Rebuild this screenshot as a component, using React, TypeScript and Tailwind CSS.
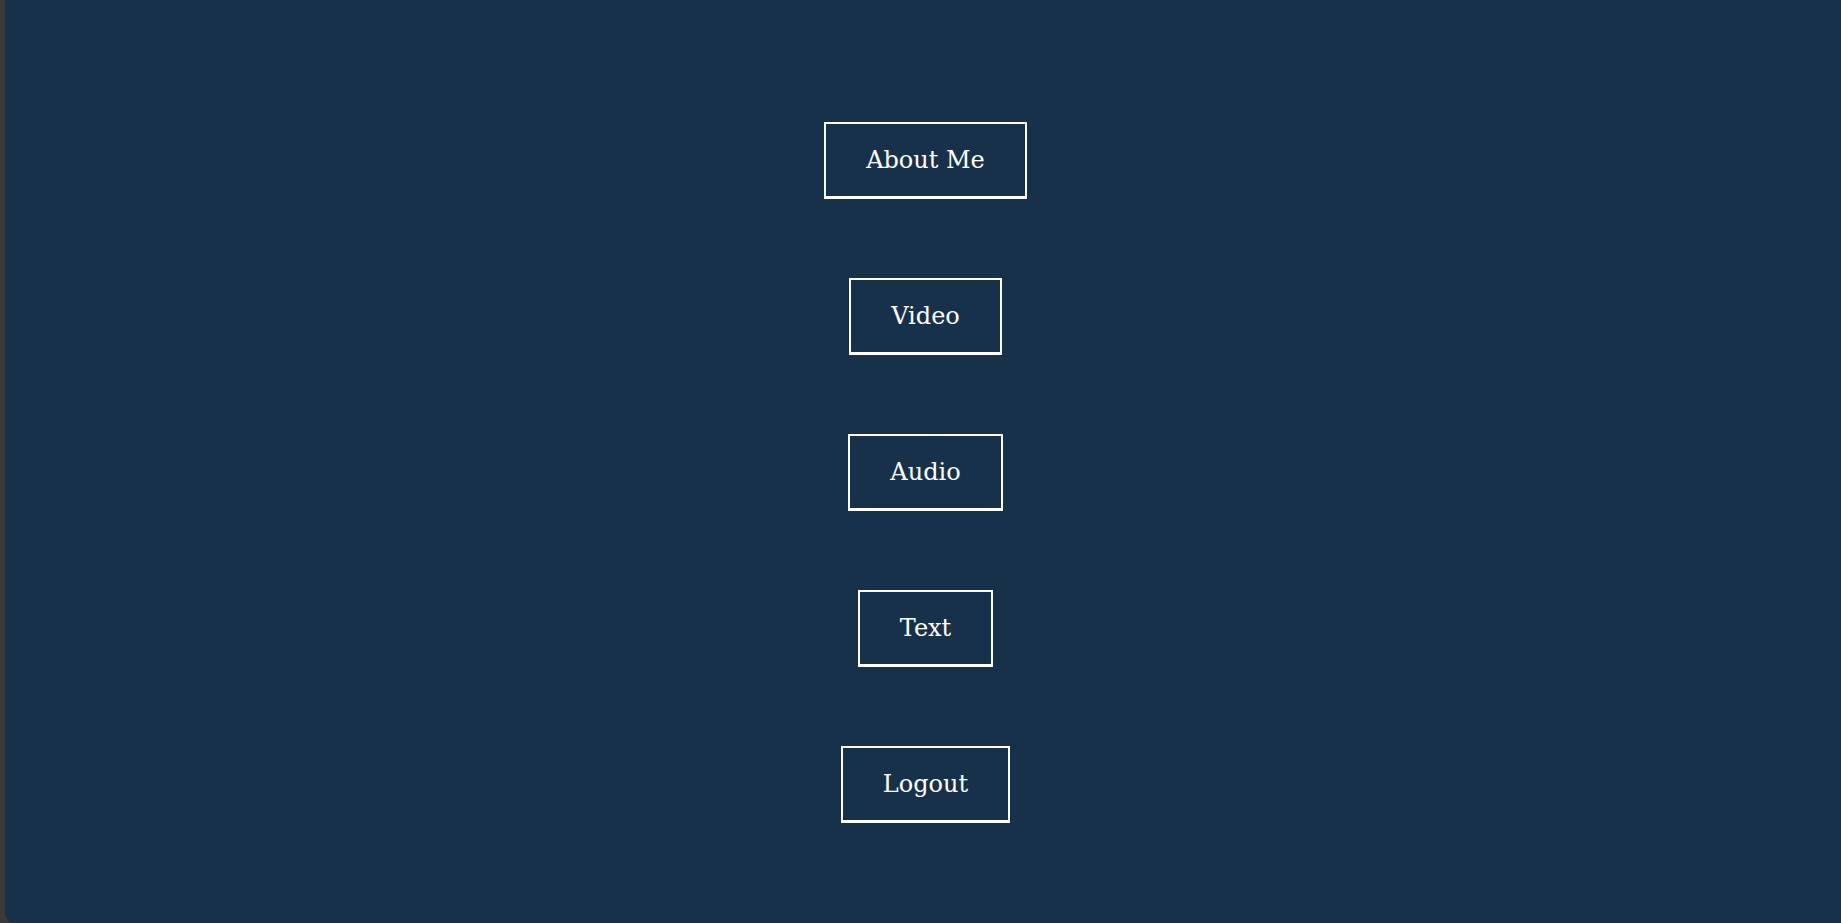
import React from "react";

const items = ["About Me", "Video", "Audio", "Text", "Logout"];

const NavButton = ({ label }: { label: string }) => {
  return (
    <button className="border-2 border-b-[3px] border-white px-[40px] pt-[18px] pb-[18px] text-[24px] leading-[36px] text-white bg-transparent">
      {label}
    </button>
  );
};

export default function App() {
  return (
    <div className="flex h-[923px] w-full bg-[#3a3a3a]">
      <div
        className="ml-[5px] flex flex-1 flex-col items-center gap-[79px] rounded-bl-[10px] bg-[#18314b] pl-[5px] pt-[122px]"
        style={{ fontFamily: '"DejaVu Serif", "Liberation Serif", serif' }}
      >
        {items.map((item) => (
          <NavButton key={item} label={item} />
        ))}
      </div>
    </div>
  );
}
